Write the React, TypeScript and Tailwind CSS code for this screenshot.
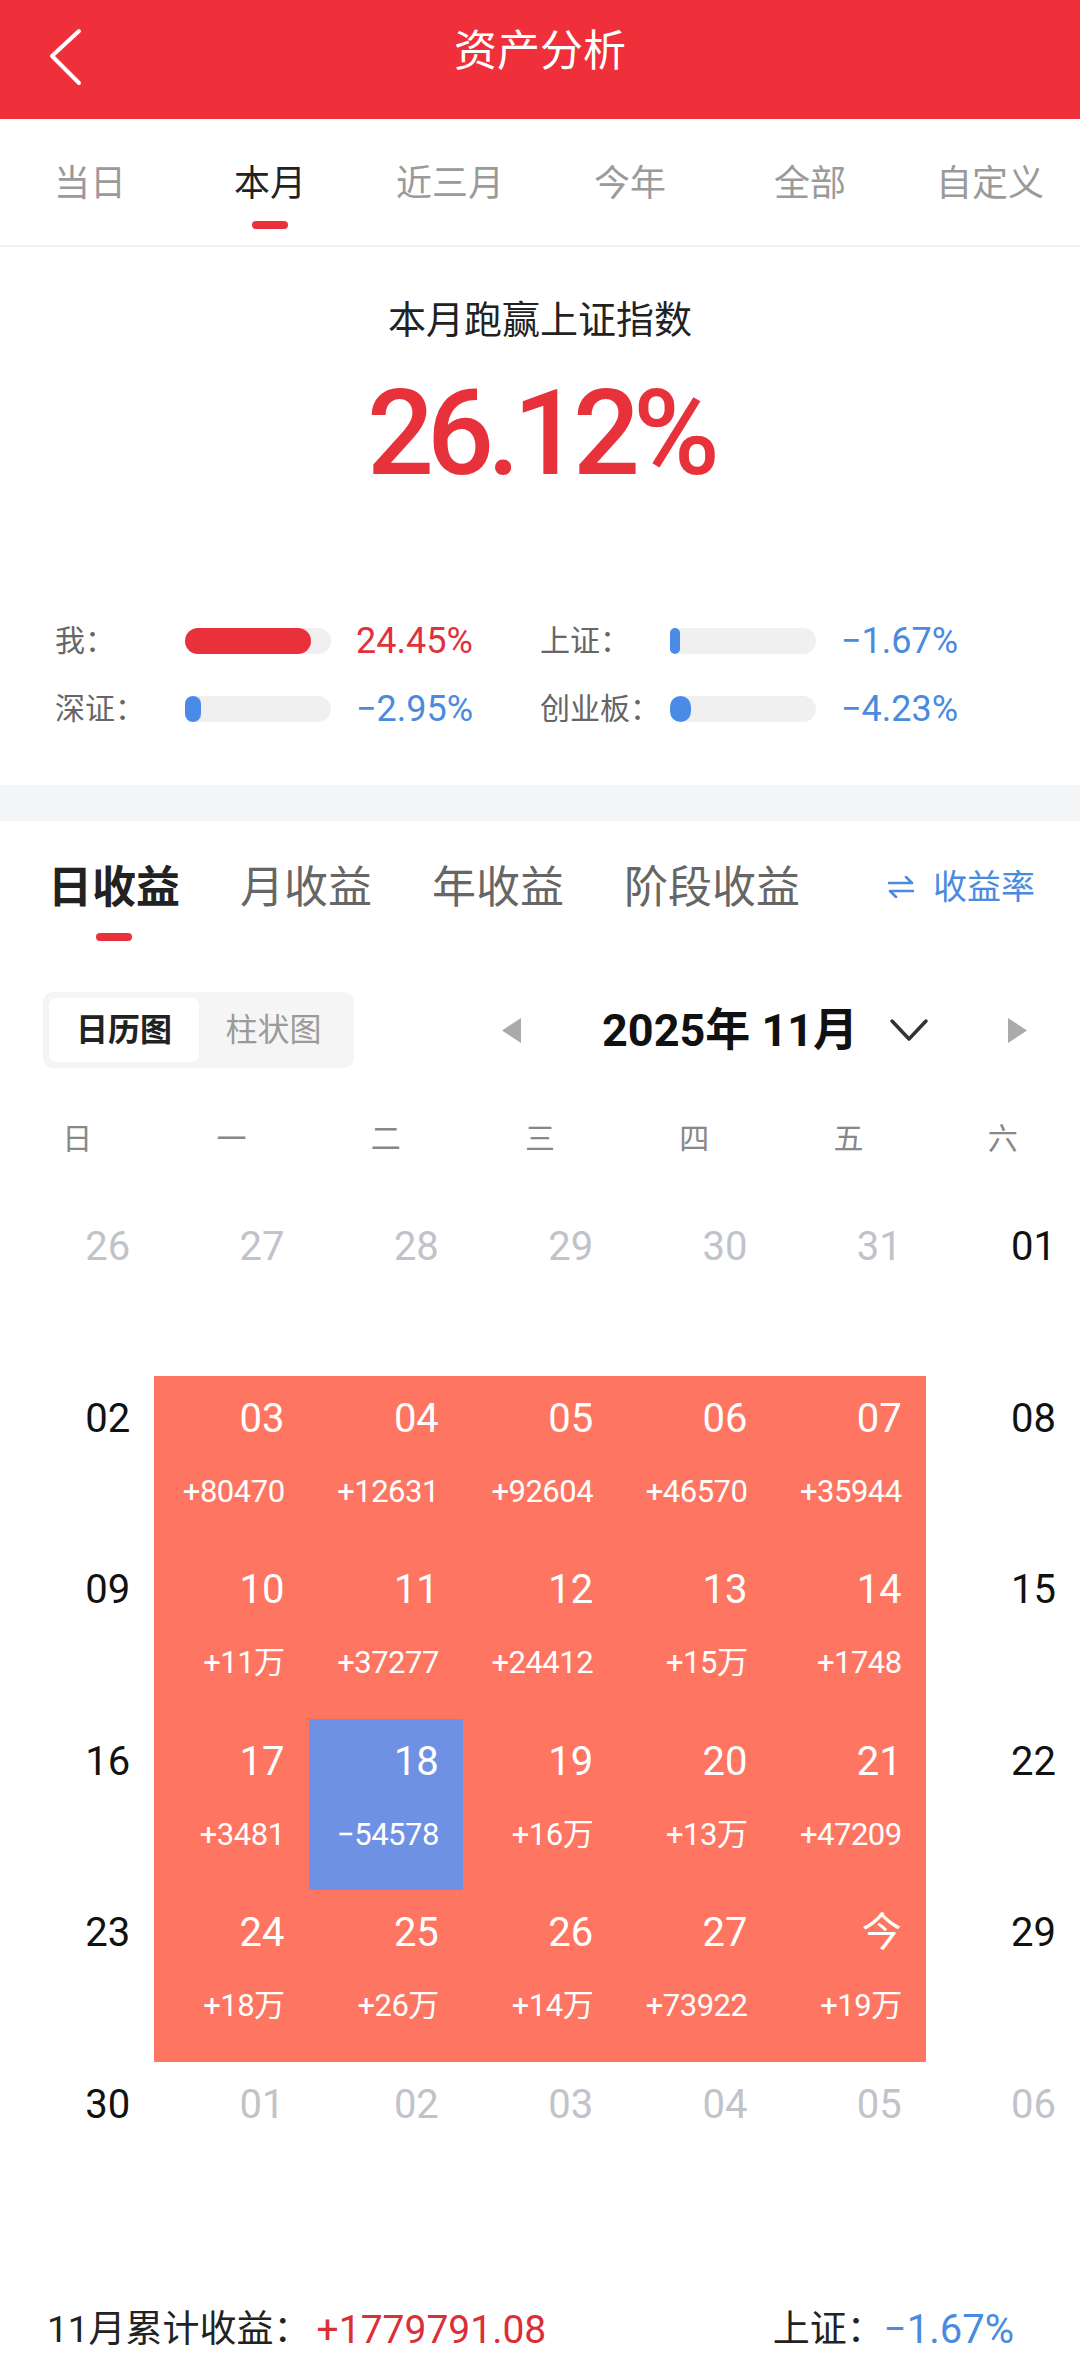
import React from "react";

type Kind = "gray" | "black" | "up" | "down";
type Cell = { d: string; v?: string; k: Kind };

const g = (d: string): Cell => ({ d, k: "gray" });
const b = (d: string): Cell => ({ d, k: "black" });
const u = (d: string, v: string): Cell => ({ d, v, k: "up" });
const dn = (d: string, v: string): Cell => ({ d, v, k: "down" });

const rows: Cell[][] = [
  [g("26"), g("27"), g("28"), g("29"), g("30"), g("31"), b("01")],
  [b("02"), u("03", "+80470"), u("04", "+12631"), u("05", "+92604"), u("06", "+46570"), u("07", "+35944"), b("08")],
  [b("09"), u("10", "+11万"), u("11", "+37277"), u("12", "+24412"), u("13", "+15万"), u("14", "+1748"), b("15")],
  [b("16"), u("17", "+3481"), dn("18", "−54578"), u("19", "+16万"), u("20", "+13万"), u("21", "+47209"), b("22")],
  [b("23"), u("24", "+18万"), u("25", "+26万"), u("26", "+14万"), u("27", "+73922"), u("今", "+19万"), b("29")],
  [b("30"), g("01"), g("02"), g("03"), g("04"), g("05"), g("06")],
];

const topTabs = ["当日", "本月", "近三月", "今年", "全部", "自定义"];
const weekdays = ["日", "一", "二", "三", "四", "五", "六"];

type Cmp = { label: string; fill: number; value: string; up: boolean };
const cmps: Cmp[] = [
  { label: "我：", fill: 126, value: "24.45%", up: true },
  { label: "上证：", fill: 10, value: "−1.67%", up: false },
  { label: "深证：", fill: 16, value: "−2.95%", up: false },
  { label: "创业板：", fill: 21, value: "−4.23%", up: false },
];

function Bar({ fill, up }: { fill: number; up: boolean }) {
  return (
    <div className="w-[146px] h-[26px] rounded-full bg-[#F0F0F0] flex">
      <div
        className={up ? "h-full rounded-full bg-[#E8313A]" : "h-full rounded-full bg-[#4A8BE8]"}
        style={{ width: fill }}
      />
    </div>
  );
}

function DayCell({ c }: { c: Cell }) {
  const bg = c.k === "up" ? "bg-[#FE7562]" : c.k === "down" ? "bg-[#6F91E4]" : "bg-white";
  const dateColor =
    c.k === "gray" ? "text-[#C2C2CA]" : c.k === "black" ? "text-[#111111]" : "text-white";
  return (
    <div className={`h-[171.5px] flex flex-col items-end pr-[24px] pt-[23px] ${bg}`}>
      <div className={`text-[40px] leading-[40px] ${dateColor}`}>{c.d}</div>
      {c.v && <div className="mt-[37px] text-[31px] leading-[31px] text-white tracking-[-0.5px]">{c.v}</div>}
    </div>
  );
}

export default function App() {
  return (
    <div className="w-[1080px] h-[2379px] bg-white overflow-hidden font-[Roboto,'Noto_Sans_CJK_SC',sans-serif]">
      {/* Header */}
      <div className="h-[119px] bg-[#EF2F3A] grid grid-cols-[120px_1fr_120px] items-start">
        <div className="pl-[47px] pt-[28px]">
          <svg width="36" height="58" viewBox="0 0 36 58" fill="none">
            <polyline points="32,3 5,28 32,55" stroke="white" strokeWidth="4" strokeLinecap="round" strokeLinejoin="round" />
          </svg>
        </div>
        <div className="text-center text-white text-[43px] leading-[43px] pt-[30px]">资产分析</div>
        <div />
      </div>

      {/* Period tabs */}
      <div className="h-[128px] grid grid-cols-6 border-b-2 border-[#F0F0F0]">
        {topTabs.map((t, i) => (
          <div key={t} className="flex flex-col items-center pt-[47px]">
            <div className={`text-[36px] leading-[36px] ${i === 1 ? "text-[#222222]" : "text-[#9A9A9A]"}`}>{t}</div>
            {i === 1 && <div className="mt-[19px] w-[36px] h-[8px] rounded-full bg-[#E8313A]" />}
          </div>
        ))}
      </div>

      {/* Summary */}
      <div className="h-[538px] flex flex-col items-center">
        <div className="mt-[54px] text-[38px] leading-[38px] text-[#222222]">本月跑赢上证指数</div>
        <div className="mt-[36px] text-[118px] leading-[118px] font-medium text-[#E8323B] tracking-[-7px]">26.12%</div>
        <div className="mt-[134px] w-full px-[55px] grid grid-cols-2 gap-y-[40px]">
          {cmps.map((c) => (
            <div key={c.label} className="flex items-center h-[28px]">
              <div className="w-[130px] text-[30px] leading-[30px] text-[#666666]">{c.label}</div>
              <Bar fill={c.fill} up={c.up} />
              <div className={`ml-[25px] text-[36px] leading-[36px] ${c.up ? "text-[#E0323C]" : "text-[#4A8BE0]"}`}>
                {c.value}
              </div>
            </div>
          ))}
        </div>
      </div>

      <div className="h-[36px] bg-[#F4F5F7]" />

      {/* Income tabs */}
      <div className="h-[120px] flex items-start pl-[48px] pr-[45px]">
        {["日收益", "月收益", "年收益", "阶段收益"].map((t, i) => (
          <div key={t} className={`flex flex-col items-center pt-[45px] ${i > 0 ? "ml-[60px]" : ""}`}>
            <div className={`text-[44px] leading-[44px] ${i === 0 ? "font-bold text-[#222222]" : "text-[#666666]"}`}>{t}</div>
            {i === 0 && <div className="mt-[23px] w-[36px] h-[8px] rounded-full bg-[#E8313A]" />}
          </div>
        ))}
        <div className="ml-auto pt-[49px] flex items-center text-[#4A8BE0]">
          <svg width="26" height="22" viewBox="0 0 26 22" fill="none" className="mr-[19px]">
            <path d="M1 7 H24 L18 1" stroke="#4A8BE0" strokeWidth="2.6" strokeLinecap="round" strokeLinejoin="round" />
            <path d="M25 15 H2 L8 21" stroke="#4A8BE0" strokeWidth="2.6" strokeLinecap="round" strokeLinejoin="round" />
          </svg>
          <span className="text-[34px] leading-[34px]">收益率</span>
        </div>
      </div>

      {/* Toolbar */}
      <div className="mt-[51px] h-[76px] flex items-center">
        <div className="ml-[43px] w-[311px] h-[76px] rounded-[10px] bg-[#F5F5F5] p-[6px] flex">
          <div className="w-[150px] h-full rounded-[7px] bg-white flex items-center justify-center text-[32px] font-bold text-[#222222]">
            日历图
          </div>
          <div className="w-[149px] h-full flex items-center justify-center text-[32px] text-[#9A9A9A]">柱状图</div>
        </div>
        <svg width="19" height="25" viewBox="0 0 19 25" className="ml-[148px]">
          <polygon points="19,0 19,25 0,12.5" fill="#AAAAAA" />
        </svg>
        <div className="ml-[81px] text-[45px] leading-[45px] font-bold text-[#111111]">2025年 11月</div>
        <svg width="40" height="26" viewBox="0 0 40 26" fill="none" className="ml-[31px]">
          <polyline points="3,4 20,22 37,4" stroke="#333333" strokeWidth="3.5" strokeLinecap="round" strokeLinejoin="round" />
        </svg>
        <svg width="19" height="25" viewBox="0 0 19 25" className="ml-[79px]">
          <polygon points="0,0 0,25 19,12.5" fill="#AAAAAA" />
        </svg>
      </div>

      {/* Weekdays */}
      <div className="mt-[56px] grid grid-cols-7">
        {weekdays.map((w) => (
          <div key={w} className="text-center text-[30px] leading-[30px] text-[#888888]">
            {w}
          </div>
        ))}
      </div>

      {/* Calendar */}
      <div className="mt-[50px] grid grid-cols-7">
        {rows.flat().map((c, i) => (
          <DayCell key={i} c={c} />
        ))}
      </div>

      {/* Footer summary */}
      <div className="mt-[77px] h-[40px] flex items-center justify-between pl-[47px] pr-[66px] leading-[40px]">
        <div className="flex items-center">
          <span className="text-[37px] text-[#222222]">11月累计收益：</span>
          <span className="ml-[6px] text-[39px] text-[#DB2F38]">+1779791.08</span>
        </div>
        <div className="flex items-center">
          <span className="text-[37px] text-[#222222]">上证：</span>
          <span className="text-[40px] text-[#4A8BE0]">−1.67%</span>
        </div>
      </div>
    </div>
  );
}
